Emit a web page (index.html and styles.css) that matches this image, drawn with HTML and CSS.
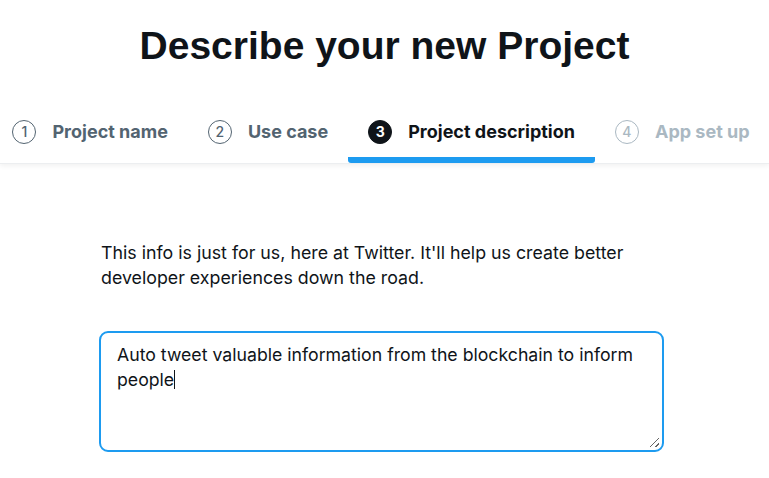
FILE: index.html
```html
<!DOCTYPE html>
<html>
<head>
<meta charset="utf-8">
<link rel="stylesheet" href="styles.css">
</head>
<body>
<header class="top">
  <h1 class="title">Describe your new Project</h1>
  <nav class="steps">
    <div class="step done"><span class="num">1</span><span class="label">Project name</span></div>
    <div class="step done"><span class="num">2</span><span class="label">Use case</span></div>
    <div class="step active"><span class="num">3</span><span class="label">Project description</span></div>
    <div class="step todo"><span class="num">4</span><span class="label">App set up</span></div>
  </nav>
</header>
<main class="content">
  <p class="intro">This info is just for us, here at Twitter. It'll help us create better developer experiences down the road.</p>
  <div class="field">Auto tweet valuable information from the blockchain to inform people<span class="caret"></span><span class="grip"></span></div>
</main>
</body>
</html>
```

FILE: styles.css
```css
html, body {
  margin: 0;
  padding: 0;
  background: #fff;
  overflow: hidden;
}
body {
  font-family: Inter, "Noto Sans", sans-serif;
  color: #0f1419;
}
.top {
  border-bottom: 1px solid #eceef0;
  box-shadow: 0 2px 5px rgba(0, 0, 0, 0.06);
}
.title {
  margin: 0;
  padding-top: 24px;
  height: 100px;
  box-sizing: border-box;
  font-family: "Liberation Sans", Arial, sans-serif;
  font-weight: 700;
  font-size: 39px;
  line-height: 44px;
  text-align: center;
  color: #0f1419;
}
.steps {
  display: flex;
  justify-content: center;
  height: 63px;
  padding-right: 7px;
}
.step {
  display: flex;
  align-items: center;
  gap: 16px;
  padding: 0 20px;
  height: 63px;
  box-sizing: border-box;
  font-size: 18px;
  font-weight: 700;
  white-space: nowrap;
  border-bottom: 6px solid transparent;
  padding-top: 6px;
}
.num {
  width: 24px;
  height: 24px;
  box-sizing: border-box;
  border-radius: 50%;
  border: 1.5px solid #536471;
  display: flex;
  align-items: center;
  justify-content: center;
  font-size: 14px;
  font-weight: 500;
}
.done { color: #536471; }
.done .num { color: #536471; }
.active { color: #0f1419; border-bottom-color: #1d9bf0; border-radius: 0 0 3px 3px; }
.active .num { background: #0f1419; border-color: #0f1419; color: #fff; font-weight: 700; }
.todo { color: #aab8c2; }
.todo .num { border-color: #aab8c2; color: #aab8c2; }
.content {
  padding: 76px 0 0 101px;
}
.intro {
  margin: 0;
  width: 560px;
  font-size: 17.8px;
  line-height: 25px;
  color: #0f1419;
}
.field {
  position: relative;
  margin: 41px 0 0 -2px;
  width: 565px;
  height: 121px;
  box-sizing: border-box;
  border: 2px solid #1d9bf0;
  border-radius: 9px;
  padding: 9px 16px;
  font-size: 17.7px;
  line-height: 25px;
  color: #0f1419;
}
.caret {
  display: inline-block;
  width: 1px;
  height: 19px;
  background: #0f1419;
  vertical-align: -3px;
}
.grip {
  position: absolute;
  right: 3px;
  bottom: 3px;
  width: 9px;
  height: 9px;
  background: linear-gradient(135deg, transparent 45%, #666 45%, #666 55%, transparent 55%, transparent 75%, #666 75%, #666 85%, transparent 85%);
}
```
